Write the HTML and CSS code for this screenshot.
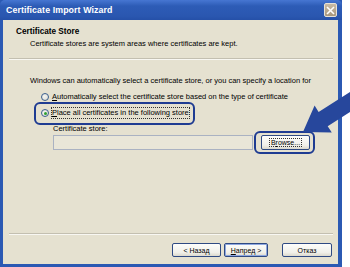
FILE: index.html
```html
<!DOCTYPE html>
<html>
<head>
<meta charset="utf-8">
<link rel="stylesheet" href="styles.css">
</head>
<body>
<div class="page">
  <div class="window">
    <div class="titlebar">
      <span class="title">Certificate Import Wizard</span>
      <span class="close"><svg width="9" height="9" viewBox="0 0 9 9"><path d="M1 1L8 8M8 1L1 8" stroke="#fff" stroke-width="1.6"/></svg></span>
    </div>
    <div class="client">
      <div class="header">
        <div class="h-title">Certificate Store</div>
        <div class="h-desc">Certificate stores are system areas where certificates are kept.</div>
      </div>
      <div class="sep"></div>
      <div class="content">
        <div class="intro">Windows can automatically select a certificate store, or you can specify a location for</div>
        <div class="radio-row">
          <span class="radio"></span>
          <span class="label"><u>A</u>utomatically select the certificate store based on the type of certificate</span>
        </div>
        <div class="radio-row second">
          <span class="radio checked"></span>
          <span class="label focus"><u>P</u>lace all certificates in the following store</span>
          <span class="hl hl-radio"></span>
        </div>
        <div class="store-label">Certificate store:</div>
        <div class="store-row">
          <div class="field"></div>
          <div class="browse-wrap">
            <button class="btn browse"><span class="focus">B<u>r</u>owse...</span></button>
            <span class="hl hl-browse"></span>
          </div>
        </div>
      </div>
      <div class="sep bottom-sep"></div>
      <div class="buttons">
        <button class="btn">&lt; Назад</button>
        <button class="btn default"><u>Н</u>апред &gt;</button>
        <button class="btn cancel">Отказ</button>
      </div>
    </div>
  </div>
  <svg class="arrow" width="80" height="60" viewBox="295 80 80 60">
    <polygon points="303,132 314.6,105.6 318.6,111.9 360.9,85.0 370.0,99.3 327.7,126.3 331.8,132.6" fill="#27479c"/>
  </svg>
</div>
</body>
</html>
```

FILE: styles.css
```css
html, body {
  margin: 0;
  padding: 0;
  background: #ffffff;
}
.page {
  position: relative;
  width: 350px;
  height: 267px;
  overflow: hidden;
  font-family: "Liberation Sans", Arial, sans-serif;
  font-size: 7.5px;
  color: #000;
}
.window {
  width: 342px;
  height: 267px;
  display: flex;
  flex-direction: column;
  box-sizing: border-box;
  background: #2b59b3;
}
.titlebar {
  height: 20px;
  flex: none;
  display: flex;
  align-items: center;
  justify-content: space-between;
  padding: 0 5px 0 6px;
  background: linear-gradient(#4676d2 0%, #2d5cb6 30%, #2a57b0 80%, #2550a8 100%);
  border-radius: 5px 5px 0 0;
}
.title {
  color: #fff;
  font-weight: bold;
  font-size: 8.8px;
  letter-spacing: 0.1px;
}
.close {
  width: 13px;
  height: 14px;
  box-sizing: border-box;
  border: 1px solid #e8e2d6;
  border-radius: 2px;
  background: linear-gradient(#c9bba5, #a8977c);
  display: flex;
  align-items: center;
  justify-content: center;
}
.client {
  flex: 1;
  margin: 0 4px 3px 3px;
  background: #e5e1d0;
  display: flex;
  flex-direction: column;
}
.header {
  height: 38px;
  box-sizing: border-box;
  padding: 7px 0 0 13px;
}
.h-title {
  font-weight: bold;
  font-size: 8.2px;
  line-height: 10px;
}
.h-desc {
  margin: 2px 0 0 14px;
  line-height: 10px;
}
.sep {
  height: 1px;
  margin: 0 5px 0 6px;
  background: #c3bfb0;
  border-bottom: 1px solid #f8f7f2;
}
.content {
  height: 173px;
  padding: 16px 0 0 27px;
  box-sizing: border-box;
}
.intro {
  line-height: 10px;
}
.radio-row {
  position: relative;
  display: flex;
  align-items: center;
  height: 12px;
  margin: 5px 0 0 11px;
}
.radio-row.second {
  margin-top: 4px;
  width: max-content;
}
.radio {
  width: 8px;
  height: 8px;
  box-sizing: border-box;
  border-radius: 50%;
  border: 1px solid #3a5f8e;
  background: radial-gradient(circle at 40% 40%, #f4f4f0, #dcdcd4);
  margin-right: 3px;
  position: relative;
  flex: none;
}
.radio.checked::after {
  content: "";
  position: absolute;
  left: 1.5px;
  top: 1.5px;
  width: 3px;
  height: 3px;
  border-radius: 50%;
  background: #2fa02f;
}
.label {
  line-height: 10px;
  white-space: nowrap;
}
.focus {
  outline: 1px dotted #333;
  outline-offset: 0;
}
.hl {
  position: absolute;
  border: 2px solid #1f3c92;
  border-radius: 6px;
}
.hl-radio {
  left: -7px;
  top: -5px;
  right: -6px;
  bottom: -6px;
}
.store-label {
  margin: 5px 0 0 23px;
  line-height: 10px;
}
.store-row {
  display: flex;
  align-items: center;
  margin: 1px 0 0 23px;
  height: 15px;
}
.field {
  width: 200px;
  height: 15px;
  box-sizing: border-box;
  border: 1px solid #aab2c2;
  background: #e9e6d8;
}
.browse-wrap {
  position: relative;
  margin-left: 8px;
  display: flex;
}
.btn {
  font-family: "Liberation Sans", Arial, sans-serif;
  font-size: 7px;
  color: #000;
  padding: 0;
  width: 49px;
  height: 15px;
  box-sizing: border-box;
  border: 1px solid #2f4a83;
  border-radius: 2px;
  background: linear-gradient(#fdfdfb, #f1f0ea 70%, #dcd9cd);
  display: flex;
  align-items: center;
  justify-content: center;
}
.browse .focus {
  padding: 0 1px;
}
.hl-browse {
  left: -7px;
  top: -4px;
  right: -5px;
  bottom: -4px;
}
.bottom-sep {
  margin: 0 5px 0 6px;
}
.buttons {
  display: flex;
  justify-content: flex-end;
  padding: 8px 6px 0 0;
}
.buttons .btn {
  width: 49px;
  height: 14px;
}
.buttons .btn.default {
  margin-left: 3px;
  width: 44px;
  box-shadow: inset 0 0 0 1px #8fa8e0;
}
.buttons .btn.cancel {
  margin-left: 14px;
  width: 50px;
}
.arrow {
  position: absolute;
  left: 295px;
  top: 80px;
}
```
